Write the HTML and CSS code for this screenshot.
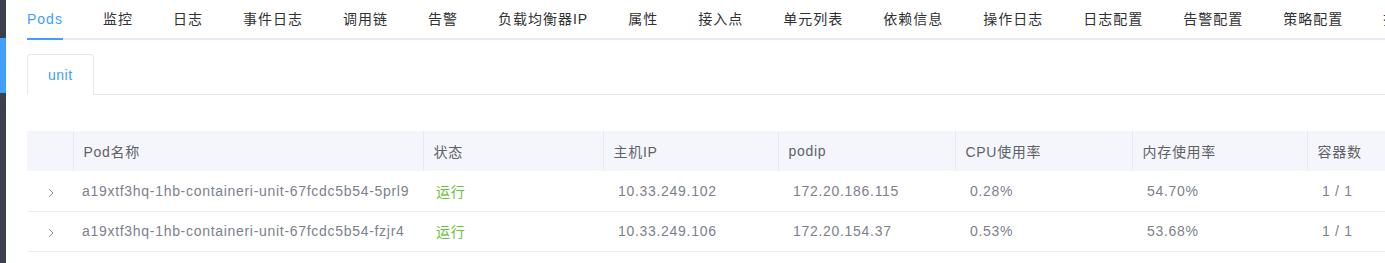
FILE: index.html
```html
<!DOCTYPE html>
<html>
<head>
  <link rel="stylesheet" href="styles.css">
</head>
<body>
  <div class="sidebar">
    <div class="sidebar-active"></div>
  </div>

  <div class="main">
    <div class="tabs">
      <div class="tab active">Pods</div>
      <div class="tab">监控</div>
      <div class="tab">日志</div>
      <div class="tab">事件日志</div>
      <div class="tab">调用链</div>
      <div class="tab">告警</div>
      <div class="tab">负载均衡器IP</div>
      <div class="tab">属性</div>
      <div class="tab">接入点</div>
      <div class="tab">单元列表</div>
      <div class="tab">依赖信息</div>
      <div class="tab">操作日志</div>
      <div class="tab">日志配置</div>
      <div class="tab">告警配置</div>
      <div class="tab">策略配置</div>
      <div class="tab">拓扑信息</div>
    </div>

    <div class="card-tabs">
      <div class="card-tab">unit</div>
    </div>

    <table class="pod-table">
      <colgroup>
        <col style="width: 46px">
        <col style="width: 350px">
        <col style="width: 180px">
        <col style="width: 175px">
        <col style="width: 177px">
        <col style="width: 177px">
        <col style="width: 175px">
        <col style="width: 100px">
      </colgroup>
      <thead>
        <tr>
          <th></th>
          <th>Pod名称</th>
          <th>状态</th>
          <th>主机IP</th>
          <th>podip</th>
          <th>CPU使用率</th>
          <th>内存使用率</th>
          <th>容器数</th>
        </tr>
      </thead>
      <tbody>
        <tr>
          <td class="expand">
            <svg width="8" height="10" viewBox="0 0 8 10"><polyline points="2,1 6,5 2,9" fill="none" stroke="#8c8f99" stroke-width="1"/></svg>
          </td>
          <td class="name">a19xtf3hq-1hb-containeri-unit-67fcdc5b54-5prl9</td>
          <td class="status">运行</td>
          <td>10.33.249.102</td>
          <td>172.20.186.115</td>
          <td>0.28%</td>
          <td>54.70%</td>
          <td>1 / 1</td>
        </tr>
        <tr>
          <td class="expand">
            <svg width="8" height="10" viewBox="0 0 8 10"><polyline points="2,1 6,5 2,9" fill="none" stroke="#8c8f99" stroke-width="1"/></svg>
          </td>
          <td class="name">a19xtf3hq-1hb-containeri-unit-67fcdc5b54-fzjr4</td>
          <td class="status">运行</td>
          <td>10.33.249.106</td>
          <td>172.20.154.37</td>
          <td>0.53%</td>
          <td>53.68%</td>
          <td>1 / 1</td>
        </tr>
      </tbody>
    </table>
  </div>
</body>
</html>
```

FILE: styles.css
```css
* {
  margin: 0;
  padding: 0;
  box-sizing: border-box;
  font-family: 'Liberation Sans', 'Noto Sans CJK SC', sans-serif;
}

body {
  display: flex;
  height: 263px;
  background: #fff;
  overflow: hidden;
}

/* left nav strip */
.sidebar {
  width: 6px;
  flex-shrink: 0;
  background: #3b3f4e;
  padding-top: 38px;
}

.sidebar-active {
  height: 55px;
  background: #409eff;
}

.main {
  flex: 1;
  min-width: 0;
  padding-left: 21px;
  overflow: hidden;
}

/* top tabs */
.tabs {
  display: flex;
  gap: 40px;
  height: 40px;
  border-bottom: 2px solid #e9eaf4;
  white-space: nowrap;
}

.tab {
  font-size: 14px;
  letter-spacing: 1px;
  line-height: 39px;
  color: #303133;
  flex-shrink: 0;
}

.tab.active {
  color: #409eff;
  border-bottom: 2px solid #409eff;
  margin-bottom: -2px;
}

/* card tabs */
.card-tabs {
  display: flex;
  margin-top: 14px;
  border-bottom: 1px solid #e6e8f0;
}

.card-tab {
  height: 41px;
  line-height: 40px;
  padding: 0 20px;
  font-size: 14px;
  letter-spacing: 0.5px;
  color: #409eff;
  border: 1px solid #e6e8f0;
  border-bottom: none;
  border-radius: 4px 4px 0 0;
  margin-bottom: -1px;
  background: #fff;
}

/* pods table */
.pod-table {
  margin-top: 36px;
  border-collapse: collapse;
  table-layout: fixed;
  width: 1380px;
  font-size: 14px;
  letter-spacing: 0.7px;
}

.pod-table th {
  height: 40px;
  background: #f5f6fc;
  color: #606266;
  font-weight: normal;
  text-align: left;
  padding-left: 10px;
  border-left: 1px solid #e6e8f2;
}

.pod-table th:first-child {
  border-left: none;
}

.pod-table td {
  height: 40px;
  color: #7c7f8c;
  padding-left: 15px;
  border-bottom: 1px solid #ebedf3;
  white-space: nowrap;
}

.pod-table td.expand {
  padding-left: 20px;
  padding-top: 4px;
}

.pod-table td.name {
  padding-left: 9px;
}

.pod-table td.status {
  padding-left: 13px;
  color: #67c23a;
}
```
